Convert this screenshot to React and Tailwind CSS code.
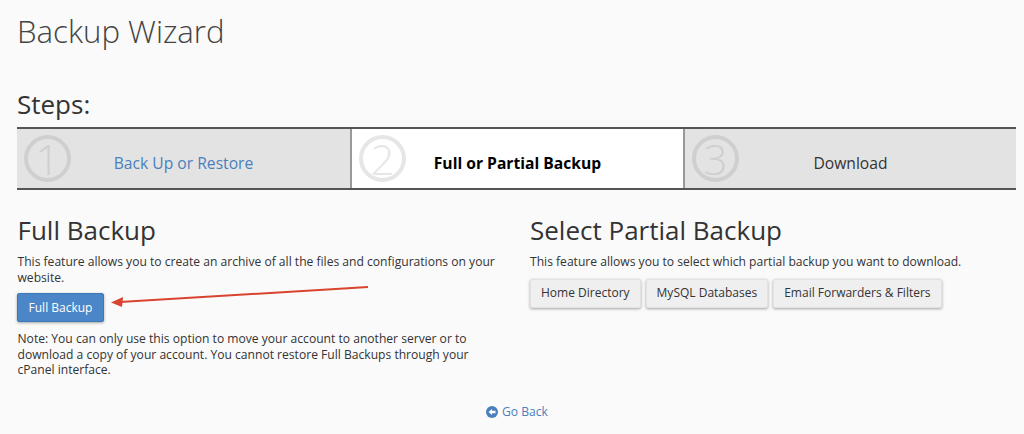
const font = { fontFamily: '"Open Sans", sans-serif' };

function Step({ n, label, active, textClass, widthClass }) {
  return (
    <div className={`relative h-full flex items-center justify-center pt-[11px] border-l-2 first:border-l-0 border-[#999] ${widthClass} ${active ? "bg-white" : "bg-[#e3e3e3]"}`}>
      <div className={`absolute left-[7px] top-[6px] w-[47px] h-[47px] rounded-full border-[4px] flex items-center justify-center text-[42px] font-light leading-none ${active ? "border-[#e6e6e6] text-[#e6e6e6]" : "border-[#cfcfcf] text-[#cfcfcf]"}`}>{n}</div>
      <span className={textClass}>{label}</span>
    </div>
  );
}

function Gray({ children }) {
  return (
    <button className="h-[29px] px-[10px] rounded-[2px] bg-[#efefef] border border-[#e2e2e2] shadow-[0_1px_3px_rgba(0,0,0,0.35)] text-[12px] text-[#333] whitespace-nowrap">{children}</button>
  );
}

export default function App() {
  return (
    <div style={font} className="relative w-[1024px] h-[434px] overflow-hidden bg-[#fafafa] text-[#333] pl-[17px] pr-[8px]">
      <h1 className="text-[31.2px] font-light leading-[40px] pt-[11px] h-[52px] text-[#444] box-content">Backup Wizard</h1>
      <h2 className="text-[26px] leading-[32px] mt-[25px] h-[32px] text-[#333] font-normal">Steps:</h2>
      <div className="flex w-[999px] h-[63px] mt-[7px] border-y-2 border-[#555]">
        <Step n="1" widthClass="w-[333px]" label="Back Up or Restore" textClass="text-[15.65px] text-[#4a80bd]" />
        <Step n="2" widthClass="w-[333px]" label="Full or Partial Backup" active textClass="text-[15.65px] font-bold text-black" />
        <Step n="3" widthClass="w-[333px]" label="Download" textClass="text-[15.65px] text-[#333]" />
      </div>
      <div className="flex mt-[24px]">
        <div className="w-[513px]">
          <h3 className="text-[26px] leading-[32px] text-[#333] ml-[0.5px]">Full Backup</h3>
          <p className="text-[12.1px] leading-[15.5px] mt-[8px] ml-[0.5px] w-[490px] text-[#333]">This feature allows you to create an archive of all the files and configurations on your website.</p>
          <button className="block mt-[8px] h-[29px] w-[87px] rounded-[2px] bg-[#4a86c8] border border-[#3f78b8] shadow-[0_1px_3px_rgba(0,0,0,0.35)] text-[12px] text-white">Full Backup</button>
          <p className="text-[12.1px] leading-[15.5px] mt-[9px] ml-[0.5px] w-[480px] text-[#333]">Note: You can only use this option to move your account to another server or to download a copy of your account. You cannot restore Full Backups through your cPanel interface.</p>
        </div>
        <div>
          <h3 className="text-[26px] leading-[32px] text-[#333]">Select Partial Backup</h3>
          <p className="text-[12.1px] leading-[15.5px] mt-[8px] whitespace-nowrap text-[#333]">This feature allows you to select which partial backup you want to download.</p>
          <div className="flex gap-[5px] mt-[9px]">
            <Gray>Home Directory</Gray>
            <Gray>MySQL Databases</Gray>
            <Gray>Email Forwarders &amp; Filters</Gray>
          </div>
        </div>
      </div>
      <div className="absolute left-0 right-0 top-[403px] flex items-center justify-center gap-[4px] pl-[10px] text-[12.1px] leading-[18px] text-[#4a80bd]">
        <svg width="12" height="12" viewBox="0 0 12 12">
          <circle cx="6" cy="6" r="6" fill="#4a80bd" />
          <path d="M2.5 6 L6 3 V4.8 H9.5 V7.2 H6 V9 Z" fill="#fff" />
        </svg>
        <span>Go Back</span>
      </div>
      <svg className="absolute left-0 top-0 pointer-events-none" width="1024" height="434" viewBox="0 0 1024 434">
        <line x1="368" y1="287" x2="120" y2="302" stroke="#d9432f" strokeWidth="2" />
        <path d="M111 302.5 L123 297 L122 307 Z" fill="#d9432f" />
      </svg>
    </div>
  );
}
